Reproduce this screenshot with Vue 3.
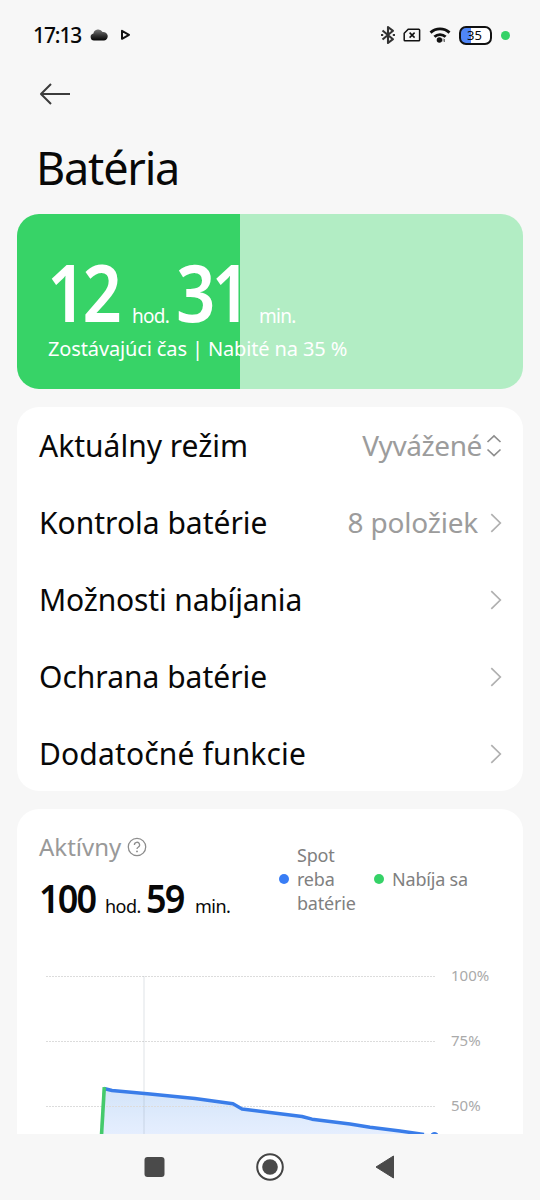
<script setup>
const rows = [
  { label: 'Aktuálny režim', value: 'Vyvážené', icon: 'updown', cls: 'r1' },
  { label: 'Kontrola batérie', value: '8 položiek', icon: 'chevron', cls: 'r2' },
  { label: 'Možnosti nabíjania', value: '', icon: 'chevron', cls: 'r3' },
  { label: 'Ochrana batérie', value: '', icon: 'chevron', cls: 'r4' },
  { label: 'Dodatočné funkcie', value: '', icon: 'chevron', cls: 'r5' },
]
const ticks = [
  { y: 16.5, label: '100%' },
  { y: 81.5, label: '75%' },
  { y: 146.5, label: '50%' },
]
</script>

<template>
  <div class="screen">
    <header class="status">
      <span class="clock">17:13</span>
      <svg class="cloud" width="18" height="12" viewBox="0 0 18 12">
        <defs>
          <linearGradient id="cloudFill" x1="0" y1="0" x2="0" y2="1">
            <stop offset="0" stop-color="#777" />
            <stop offset="0.55" stop-color="#333" />
            <stop offset="1" stop-color="#050505" />
          </linearGradient>
        </defs>
        <path d="M4 11.5a3.6 3.6 0 0 1-.6-7.1A5 5 0 0 1 12.6 3a4.2 4.2 0 0 1 1.6 8.5z" fill="url(#cloudFill)" />
      </svg>
      <svg class="play" width="11" height="12" viewBox="0 0 11 12">
        <path d="M2 1.8 9 5.8 2 9.8z" fill="none" stroke="#111" stroke-width="2" stroke-linejoin="round" />
      </svg>
      <div class="status-icons">
        <svg width="16" height="20" viewBox="0 0 16 20">
          <path d="M2.5 5.5 13 14.2 8 18V2l5 3.8L2.5 14.5" fill="none" stroke="#333" stroke-width="2.1" stroke-linejoin="round" />
          <path d="M1 10h2.2M12.8 10H15" stroke="#333" stroke-width="1.8" />
        </svg>
        <svg class="sim" width="18" height="14" viewBox="0 0 18 14">
          <path d="M5.2 1.2H15.8a.8.8 0 0 1 .8.8V12a.8.8 0 0 1-.8.8H2a.8.8 0 0 1-.8-.8V5.2z" fill="none" stroke="#111" stroke-width="1.5" />
          <path d="m6.6 4.6 5 5m0-5-5 5" stroke="#111" stroke-width="1.5" />
        </svg>
        <svg class="wifi" width="22" height="18" viewBox="0 0 22 18">
          <path d="M1.5 6.6a14 14 0 0 1 19 0M5.4 10.8a8.2 8.2 0 0 1 11.2 0" fill="none" stroke="#111" stroke-width="2.8" />
          <circle cx="10.4" cy="14" r="2.7" fill="#111" />
          <path d="M14 12.5v3M15.4 13v3" stroke="#555" stroke-width=".9" />
        </svg>
        <div class="battery"><span>35</span></div>
        <i class="live"></i>
      </div>
    </header>

    <svg class="back" width="32" height="24" viewBox="0 0 32 24">
      <path d="M31 12H2M12 2 2 12l10 10" fill="none" stroke="#3c3c3c" stroke-width="2" stroke-linejoin="round" />
    </svg>
    <h1>Batéria</h1>

    <section class="hero">
      <div class="time">
        <b class="h">12</b><span class="hu">hod.</span><b class="m">31</b><span class="mu">min.</span>
      </div>
      <p>Zostávajúci čas | Nabité na 35 %</p>
    </section>

    <section class="card list">
      <div v-for="row in rows" :key="row.label" class="row">
        <span class="label" :class="row.cls">{{ row.label }}</span>
        <span class="value" :class="row.cls">{{ row.value }}</span>
        <svg v-if="row.icon === 'updown'" class="updown" width="16" height="24" viewBox="0 0 16 24">
          <path d="m1.5 8 6.5-6 6.5 6M1.5 15.5l6.5 6 6.5-6" fill="none" stroke="#8d8d8d" stroke-width="1.7" />
        </svg>
        <svg v-else class="chev" width="12" height="20" viewBox="0 0 12 20">
          <path d="m1.3 1.2 9 8.8-9 8.8" fill="none" stroke="#b0b0b0" stroke-width="1.7" />
        </svg>
      </div>
    </section>

    <section class="card usage">
      <div class="summary">
        <div class="active">
          <div class="caption">
            <span>Aktívny</span>
            <svg width="20" height="20" viewBox="0 0 20 20">
              <circle cx="10" cy="10" r="8.7" fill="none" stroke="#8d8d8d" stroke-width="1.3" />
              <path d="M7.4 8a2.6 2.6 0 1 1 3.8 2.2c-.9.5-1.2.9-1.2 1.9" fill="none" stroke="#8d8d8d" stroke-width="1.3" />
              <circle cx="10" cy="14.4" r=".95" fill="#8d8d8d" />
            </svg>
          </div>
          <div class="total">
            <b class="th">100</b><span class="thu">hod.</span><b class="tm">59</b><span class="tmu">min.</span>
          </div>
        </div>
        <div class="legend">
          <i class="dot blue"></i>
          <span class="l1">Spot<br />reba<br />batérie</span>
          <i class="dot green"></i>
          <span class="l2">Nabíja sa</span>
        </div>
      </div>
      <svg class="chart" width="506" height="174" viewBox="17 0 506 174">
        <defs>
          <linearGradient id="area" x1="0" y1="0" x2="0" y2="1">
            <stop offset="0" stop-color="#d3e4f9" />
            <stop offset="0.75" stop-color="#e1ecfd" />
            <stop offset="1" stop-color="#e5eefe" />
          </linearGradient>
        </defs>
        <path d="M104 129 150 134 233 144 242 149 302 157 312 160 370 168 430 174H101z" fill="url(#area)" />
        <g v-for="t in ticks" :key="t.label">
          <line x1="46" :y1="t.y" x2="436" :y2="t.y" stroke="#dcdcdc" stroke-dasharray="2 1" />
          <text x="451" :y="t.y + 4">{{ t.label }}</text>
        </g>
        <line x1="144" y1="16" x2="144" y2="174" stroke="#8090a0" stroke-opacity=".18" stroke-width="1.4" />
        <path d="M104 128.5 112 130.5 150 134 195 138.5 233 143.8 242 149 270 152.5 302 156.5 312 159.2 350 164 370 167.2 400 171 424 174.5" fill="none" stroke="#3a7de9" stroke-width="3.4" stroke-linejoin="round" />
        <circle cx="434.5" cy="176.3" r="4.3" fill="#3a7de9" />
        <path d="M101.5 175 104.3 127.2" fill="none" stroke="#44ca6c" stroke-width="3.6" />
      </svg>
    </section>

    <nav class="nav">
      <svg width="540" height="66" viewBox="0 0 540 66">
        <rect x="144.500" y="23" width="20" height="20" rx="3" fill="#4a4a4a" />
        <circle cx="270" cy="33" r="12.8" fill="#fff" stroke="#444" stroke-width="2" />
        <circle cx="270" cy="33" r="7.8" fill="#4a4a4a" />
        <path d="M376 33 393.5 22V44z" fill="#4a4a4a" stroke="#4a4a4a" stroke-linejoin="round" />
      </svg>
    </nav>
  </div>
</template>

<style>
body { margin: 0; background: #f7f7f7; }
</style>

<style scoped>
.screen {
  width: 540px; height: 1200px; overflow: hidden; background: #f7f7f7;
  display: flex; flex-direction: column; color: #080808;
  font-family: "Noto Sans", "Liberation Sans", sans-serif;
}
span, b { white-space: nowrap; }
b { font-weight: 600; display: block; transform-origin: 0 50%; flex: none; }
.status { height: 70px; box-sizing: border-box; padding: 0 30px 0 33px; display: flex; align-items: center; flex: none; }
.clock { font-size: 22px; font-weight: 500; width: 57px; letter-spacing: -1.1px; transform: translateY(-1px) scaleX(.95); transform-origin: 0 50%; }
.play { margin-left: 12px; }
.status-icons { margin-left: auto; display: flex; align-items: center; }
.sim { margin-left: 7px; }
.wifi { margin-left: 8px; }
.battery {
  box-sizing: border-box; width: 33px; height: 19px; border: 2px solid #111; border-radius: 7px; margin-left: 8px;
  background: linear-gradient(90deg, #4f86f7 35%, #fff 35%);
  display: flex; align-items: center; justify-content: center; padding-right: 2px;
  font-size: 13px; line-height: 14px;
}
.live { width: 9px; height: 9px; border-radius: 50%; background: #35d267; margin-left: 9px; }
.back { margin: 12px 0 0 39px; flex: none; }
h1 { margin: 31px 0 0 36px; font-size: 45px; line-height: 62px; height: 62px; font-weight: 400; flex: none; letter-spacing: -1.2px; }
.hero {
  margin: 15px 17px 0; height: 175px; flex: none; border-radius: 22px; color: #fff; overflow: hidden;
  background: linear-gradient(90deg, #37d367 223px, #b2edc4 223px);
}
.time { display: flex; align-items: baseline; line-height: 80px; margin: 38px 0 0 31px; height: 80px; }
.time b { font-size: 80px; transform: translateY(-1px) scaleX(.86); letter-spacing: -4.5px; }
.time .h { width: 84px; margin-left: -1px; margin-right: 1px; }
.time .m { width: 82px; margin-left: -1px; margin-right: 1px; }
.time span { font-size: 19px; letter-spacing: -.7px; }
.time .hu { width: 45px; }
.hero p { margin: 3px 0 0 31px; font-size: 20px; line-height: 27px; white-space: nowrap; letter-spacing: -.13px; }
.card { background: #fff; margin: 0 17px; flex: none; border-radius: 22px; }
.list { margin-top: 18px; height: 384px; }
.row { height: 77px; padding: 0 21px 0 22px; display: flex; align-items: center; }
.label { font-size: 30px; }
.r3 { letter-spacing: -.15px; }
.r5 { letter-spacing: .15px; }
.value { font-size: 28px; color: #9c9c9c; margin-left: auto; position: relative; top: -1px; letter-spacing: -.4px; }
.value.r2 { letter-spacing: -.2px; }
.updown { margin-left: 4px; }
.chev { margin-left: 12px; }
.usage { margin-top: 18px; height: 325px; border-radius: 22px 22px 0 0; overflow: hidden; }
.summary { height: 151px; display: flex; }
.active { width: 262px; padding-left: 22px; box-sizing: border-box; }
.caption { display: flex; align-items: center; margin-top: 21px; height: 34px; font-size: 24px; color: #999; }
.caption span { position: relative; top: -1px; }
.caption svg { margin-left: 6px; }
.total { display: flex; align-items: baseline; margin-top: 9px; line-height: 50px; }
.total b { font-size: 40px; letter-spacing: -2px; transform: scaleX(.9); }
.th { width: 66px; }
.thu { width: 41px; }
.tm { width: 49px; }
.total span { font-size: 18px; letter-spacing: -.5px; }
.legend { display: flex; align-items: center; height: 72px; margin-top: 34px; color: #808080; font-size: 18px; line-height: 24px; letter-spacing: -.2px; }
.dot { width: 10px; height: 10px; border-radius: 50%; }
.blue { background: #397df5; margin-right: 8px; }
.green { background: #35d267; margin-right: 8px; }
.l1 { width: 77px; }
.chart { display: block; }
.chart text { font-size: 15px; fill: #aaa; }
.nav { height: 66px; flex: none; background: #f7f7f7; }
.nav svg { display: block; }
</style>
